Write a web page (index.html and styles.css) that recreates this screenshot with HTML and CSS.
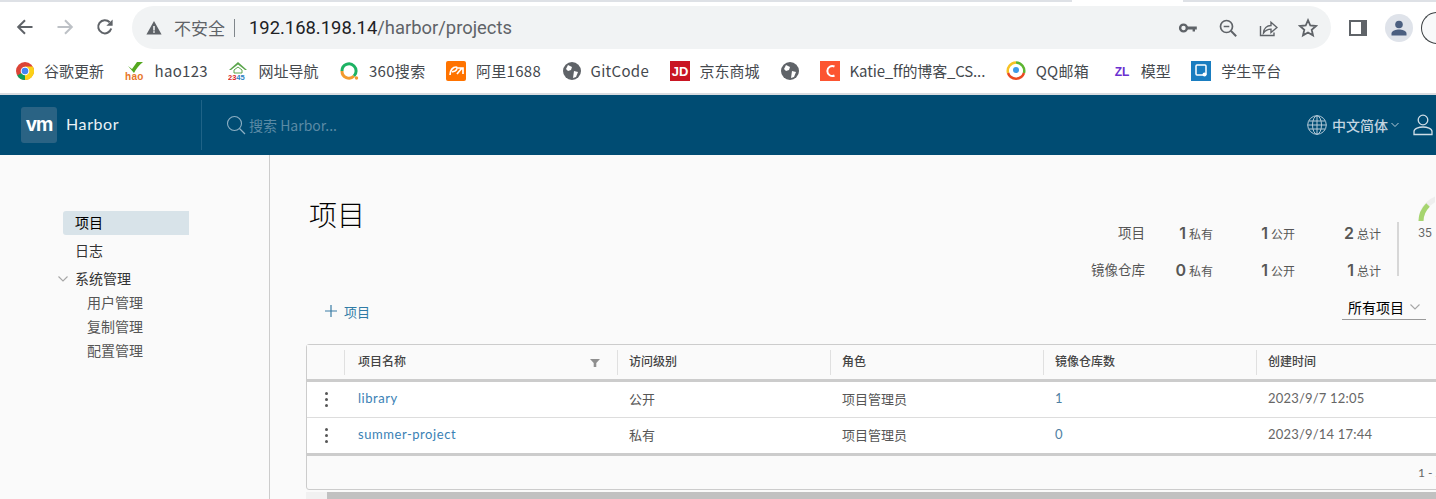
FILE: index.html
```html
<!DOCTYPE html>
<html lang="zh-CN">
<head>
  <meta charset="UTF-8" />
  <title>Harbor</title>
  <link rel="stylesheet" href="styles.css">
</head>
<body>
  <div class="tabstrip"><span class="strip-gray"></span><span class="strip-white"></span><span class="strip-rest"></span></div>

  <!-- browser toolbar -->
  <div class="toolbar">
    <button class="nav-btn">
      <svg width="20" height="20" viewBox="0 0 20 20"><path d="M17.5 10H3.5M10 3.2L3.2 10l6.8 6.8" fill="none" stroke="#5f6368" stroke-width="2"/></svg>
    </button>
    <button class="nav-btn">
      <svg width="20" height="20" viewBox="0 0 20 20"><path d="M2.5 10h14M10 3.2l6.8 6.8-6.8 6.8" fill="none" stroke="#bdc1c6" stroke-width="2"/></svg>
    </button>
    <button class="nav-btn">
      <svg width="20" height="20" viewBox="0 0 20 20"><path d="M16.2 11.5a6.6 6.6 0 1 1-1.5-6.2" fill="none" stroke="#5f6368" stroke-width="2"/><path d="M17.6 2.6v6.2h-6.2z" fill="#5f6368"/></svg>
    </button>
    <div class="urlbar">
      <svg class="warn" width="16" height="16" viewBox="0 0 16 16"><path d="M8 1l7.6 13.6H.4z" fill="#5f6368"/><path d="M7.2 6h1.6v4.4H7.2zM7.2 11.2h1.6v1.5H7.2z" fill="#f1f3f4"/></svg>
      <span class="insecure">不安全</span>
      <span class="sep"></span>
      <span class="url"><span class="host">192.168.198.14</span>/harbor/projects</span>
      <span class="url-icons">
        <svg width="20" height="20" viewBox="0 0 20 20"><circle cx="5.5" cy="10" r="3.4" fill="none" stroke="#5f6368" stroke-width="2.4"/><path d="M8.5 8.6h10.3v2.8h-1.8v2h-2.4v-2H8.5z" fill="#5f6368"/></svg>
        <svg width="20" height="20" viewBox="0 0 20 20"><circle cx="8.5" cy="8.5" r="6" fill="none" stroke="#5f6368" stroke-width="1.7"/><path d="M12.8 12.8l5.4 5.4" stroke="#5f6368" stroke-width="2"/><path d="M5.7 8.5h5.6" stroke="#5f6368" stroke-width="1.5"/></svg>
        <svg width="20" height="20" viewBox="0 0 20 20"><path d="M2.5 8v9.5h13.5v-3" fill="none" stroke="#5f6368" stroke-width="1.4"/><path d="M5.5 15c.3-4.800 3.500-7.500 7.500-7.500V4.200l6 5.300-6 5v-3.400c-3 0-5.500 1.200-7.500 3.900z" fill="none" stroke="#5f6368" stroke-width="1.4"/></svg>
        <svg width="20" height="20" viewBox="0 0 20 20"><path d="M10 2.200l2.300 5.300 5.700.5-4.300 3.800 1.300 5.600L10 14.500l-5 2.900 1.300-5.600L2 8l5.700-.5z" fill="none" stroke="#5f6368" stroke-width="1.800"/></svg>
      </span>
    </div>
    <div class="tool-right">
      <svg width="18" height="18" viewBox="0 0 18 18"><rect x="0" y="1" width="18" height="16" fill="#5f6368"/><rect x="2" y="3" width="10" height="12" fill="#fff"/></svg>
      <span class="avatar"><svg width="18" height="18" viewBox="0 0 18 18"><circle cx="9" cy="5.500" r="3.800" fill="#4b5f80"/><path d="M1.500 16.500v-2c0-2.800 4.500-4 7.500-4s7.500 1.200 7.500 4v2z" fill="#4b5f80"/></svg></span>
      <span class="profile-pill"></span>
    </div>
  </div>

  <!-- bookmarks -->
  <div class="bookmarks">
    <a class="bm">
      <svg width="18" height="18" viewBox="0 0 18 18"><circle cx="9" cy="9" r="9" fill="#db4437"/><path d="M9 9L1.200 13.500A9 9 0 0 0 9 18z" fill="#0f9d58"/><path d="M9 9v9a9 9 0 0 0 7.800-13.500H9z" fill="#fcd116"/><circle cx="9" cy="9" r="4.300" fill="#fff"/><circle cx="9" cy="9" r="3.300" fill="#4285f4"/></svg>
      谷歌更新
    </a>
    <a class="bm bm-latin">
      <svg width="20" height="20" viewBox="0 0 20 20"><path d="M3 5l4 3 5-7h6c-4 3-7 7-9 11z" fill="#54a81f"/><text x="0" y="19" class="fav-hao">hao</text></svg>
      hao123
    </a>
    <a class="bm">
      <svg width="20" height="20" viewBox="0 0 20 20"><path d="M10 1L1 9h2l7-5.500L17 9h2z" fill="#5aa54b"/><path d="M6 9l4-3 4 3v3H6z" fill="none" stroke="#5aa54b"/><text x="0" y="19" class="fav-2345"><tspan fill="#d9261c">23</tspan><tspan fill="#2b7fc3">45</tspan></text></svg>
      网址导航
    </a>
    <a class="bm bm-latin">
      <svg width="20" height="20" viewBox="0 0 20 20"><path d="M15 15a7 7 0 0 1-12-5" fill="none" stroke="#f29a2e" stroke-width="3"/><path d="M3 10a7 7 0 0 1 12-5 7 7 0 0 1 0 10" fill="none" stroke="#1db263" stroke-width="3"/><circle cx="17.500" cy="17" r="1.700" fill="#f29a2e"/></svg>
      360搜索
    </a>
    <a class="bm bm-latin">
      <svg width="20" height="20" viewBox="0 0 20 20"><rect width="20" height="20" rx="2" fill="#ff7300"/><path d="M4 14c0-5 3-8 6-8 2 0 1 3-1 4l-3 1M11 13l5-6M12 7h5v6" fill="none" stroke="#fff" stroke-width="1.700"/></svg>
      阿里1688
    </a>
    <a class="bm bm-latin bm-globe">
      <svg width="18" height="18" viewBox="0 0 18 18"><circle cx="9" cy="9" r="9" fill="#5f6368"/><path d="M5 3l4 2-1 3-3 1-2-2zM11 9l4 1-2 5-3 1z" fill="#fff"/></svg>
      GitCode
    </a>
    <a class="bm">
      <svg width="20" height="20" viewBox="0 0 20 20"><rect width="20" height="20" fill="#c91623"/><text x="10" y="15" text-anchor="middle" class="fav-letters">JD</text></svg>
      京东商城
    </a>
    <a class="bm bm-globe">
      <svg width="18" height="18" viewBox="0 0 18 18"><circle cx="9" cy="9" r="9" fill="#5f6368"/><path d="M5 3l4 2-1 3-3 1-2-2zM11 9l4 1-2 5-3 1z" fill="#fff"/></svg>
    </a>
    <a class="bm bm-tight">
      <svg width="20" height="20" viewBox="0 0 20 20"><rect width="20" height="20" fill="#fc5531"/><path d="M14.500 5.500a5 5 0 1 0 0 9" fill="none" stroke="#fff" stroke-width="2"/></svg>
      Katie_ff的博客_CS...
    </a>
    <a class="bm bm-latin">
      <svg width="20" height="20" viewBox="0 0 20 20"><path d="M2 12A8.500 8.500 0 0 1 10 1.500" fill="none" stroke="#f7c325" stroke-width="2.500"/><path d="M10 1.500A8.500 8.500 0 0 1 18 12" fill="none" stroke="#5cb531" stroke-width="2.500"/><path d="M18 12a8.500 8.500 0 0 1-16 0" fill="none" stroke="#ea4a21" stroke-width="2.500"/><circle cx="10" cy="9" r="3" fill="#3d9be9"/></svg>
      QQ邮箱
    </a>
    <a class="bm bm-zl">
      <svg width="20" height="20" viewBox="0 0 20 20"><text x="10" y="15" text-anchor="middle" class="fav-zl">ZL</text></svg>
      模型
    </a>
    <a class="bm">
      <svg width="20" height="20" viewBox="0 0 20 20"><rect width="20" height="20" fill="#1a7dc0"/><rect x="5" y="4" width="10" height="10" rx="1" fill="none" stroke="#fff" stroke-width="1.500"/><circle cx="13.500" cy="13.500" r="2" fill="#fff"/></svg>
      学生平台
    </a>
  </div>

  <!-- harbor header -->
  <header class="app-header">
    <div class="brand">
      <span class="logo">vm</span>
      <span class="brand-name">Harbor</span>
    </div>
    <div class="search">
      <svg width="20" height="20" viewBox="0 0 20 20"><circle cx="8.500" cy="8.500" r="7" fill="none" stroke="#8db0c4" stroke-width="1.100"/><path d="M13.500 13.500l5.500 5.500" stroke="#8db0c4" stroke-width="1.300"/></svg>
      <span>搜索 Harbor...</span>
    </div>
    <div class="header-right">
      <svg width="20" height="20" viewBox="0 0 20 20" fill="none" stroke="#b4cad8" stroke-width="1"><circle cx="10" cy="10" r="9.300"/><ellipse cx="10" cy="10" rx="4.500" ry="9.300"/><path d="M10 .7v18.600M1.800 6h16.400M.7 10h18.600M1.800 14h16.400"/></svg>
      <span class="lang">中文简体</span>
      <svg class="caret" width="8" height="6" viewBox="0 0 8 6"><path d="M.5 1l3.500 3.500L7.500 1" fill="none" stroke="#b4cad8"/></svg>
      <svg class="user" width="20" height="22" viewBox="0 0 20 22" fill="none" stroke="#cfdde6" stroke-width="1.300"><circle cx="10" cy="6" r="4.800"/><path d="M1 20.500v-3c0-3 5-4.500 9-4.500s9 1.500 9 4.500v3z"/></svg>
    </div>
  </header>

  <div class="app-body">
    <nav class="sidenav">
      <a class="nav-item active">项目</a>
      <a class="nav-item">日志</a>
      <div class="nav-group">
        <svg width="10" height="6" viewBox="0 0 10 6"><path d="M.5.500L5 5 9.500.5" fill="none" stroke="#a6a6a6" stroke-width="1.100"/></svg>
        系统管理
      </div>
      <a class="nav-sub">用户管理</a>
      <a class="nav-sub">复制管理</a>
      <a class="nav-sub">配置管理</a>
    </nav>

    <main class="content">
      <div class="top-row">
        <h1>项目</h1>
        <div class="stats">
          <span class="stat-label">项目</span>
          <span class="stat"><b>1</b>私有</span>
          <span class="stat"><b>1</b>公开</span>
          <span class="stat"><b>2</b>总计</span>
          <span class="stat-label">镜像仓库</span>
          <span class="stat"><b>0</b>私有</span>
          <span class="stat"><b>1</b>公开</span>
          <span class="stat"><b>1</b>总计</span>
        </div>
        <div class="quota">
          <svg width="17" height="26" viewBox="0 0 17 26"><path d="M3 26C3 16 8 8 20 3" fill="none" stroke="#eeeeee" stroke-width="5"/><path d="M3 26C3 20 5 15 10 10" fill="none" stroke="#a6d56f" stroke-width="5"/></svg>
          <span>35</span>
        </div>
      </div>

      <div class="action-row">
        <button class="add-btn">
          <svg width="12" height="12" viewBox="0 0 12 12"><path d="M6 0v12M0 6h12" stroke="#3a7ca5" stroke-width="1.200"/></svg>
          项目
        </button>
        <div class="filter">所有项目
          <svg width="10" height="6" viewBox="0 0 10 6"><path d="M.5.500L5 5 9.500.5" fill="none" stroke="#a6a6a6" stroke-width="1.100"/></svg>
        </div>
      </div>

      <div class="grid">
        <div class="row head">
          <div class="cell c-act"></div>
          <div class="cell c-name">项目名称
            <svg width="10" height="8" viewBox="0 0 10 8"><path d="M0 0h10L6.300 4v4H3.700V4z" fill="#8f8f8f"/></svg>
          </div>
          <div class="cell c-std">访问级别</div>
          <div class="cell c-std">角色</div>
          <div class="cell c-std">镜像仓库数</div>
          <div class="cell c-time">创建时间</div>
        </div>
        <div class="row">
          <div class="cell c-act"><span class="dots"><i></i><i></i><i></i></span></div>
          <div class="cell c-name"><a>library</a></div>
          <div class="cell c-std">公开</div>
          <div class="cell c-std">项目管理员</div>
          <div class="cell c-std count">1</div>
          <div class="cell c-time">2023/9/7 12:05</div>
        </div>
        <div class="row">
          <div class="cell c-act"><span class="dots"><i></i><i></i><i></i></span></div>
          <div class="cell c-name"><a>summer-project</a></div>
          <div class="cell c-std">私有</div>
          <div class="cell c-std">项目管理员</div>
          <div class="cell c-std count">0</div>
          <div class="cell c-time">2023/9/14 17:44</div>
        </div>
        <div class="grid-foot">1 - 2</div>
      </div>
      <div class="hscroll"><span class="arrow"></span><span class="thumb"></span></div>
    </main>
  </div>
</body>
</html>
```

FILE: styles.css
```css
* { margin: 0; padding: 0; box-sizing: border-box; }
html, body { width: 1436px; height: 499px; overflow: hidden; }
body {
  background: #fff;
  font-family: "Noto Sans CJK SC", "Noto Sans", sans-serif;
  color: #565656;
}
a { text-decoration: none; }
button { border: none; background: none; font: inherit; }

/* BROWSER */
.tabstrip { display: flex; height: 2px; }
.strip-gray { width: 1072px; background: #dee1e6; }
.strip-white { width: 111px; background: #fff; }
.strip-rest { flex: 1; background: #dee1e6; }

.toolbar {
  display: flex;
  align-items: center;
  height: 48px;
  padding-left: 15px;
}
.nav-btn { width: 20px; height: 20px; margin: 2px 20px 0 0; display: flex; flex: none; }
.nav-btn:nth-child(3) { margin-right: 17px; }
.urlbar {
  flex: none;
  width: 1199px;
  height: 43px;
  margin-top: 3px;
  background: #f1f3f4;
  border-radius: 22px;
  display: flex;
  align-items: center;
  padding: 0 13px 0 14px;
}
.insecure { margin-left: 12px; font-size: 17px; color: #5f6368; }
.sep { width: 1px; height: 18px; background: #80868b; margin: 0 14px 0 9px; }
.url { font-family: Roboto, sans-serif; font-size: 18.400px; color: #5f6368; }
.host { color: #202124; }
.url-icons { margin-left: auto; display: flex; gap: 20px; }
.tool-right { display: flex; align-items: center; margin-left: 18px; margin-top: 3px; flex: none; }
.avatar {
  width: 28px; height: 28px; margin-left: 18px;
  background: #dfe3ea; border-radius: 50%;
  display: flex; align-items: center; justify-content: center;
}
.profile-pill {
  width: 40px; height: 32px; margin-left: 8px;
  border: 1px solid #3c4043; border-radius: 16px 0 0 16px; border-right: none;
  background: #f8f9fa;
}

.bookmarks {
  display: flex;
  align-items: center;
  height: 45px;
  padding: 0 0 2px 16px;
  gap: 20.500px;
  border-bottom: 2px solid #dadce0;
  font-size: 15px;
  color: #3c4043;
}
.bm { display: flex; align-items: center; gap: 10px; white-space: nowrap; color: #45494e; }
.bm-latin { letter-spacing: .3px; }
.bm-tight { letter-spacing: -.15px; }
.bm-globe { margin-left: 1px; }
.bm-zl { margin-left: 2px; gap: 9px; }
.fav-hao { font: bold 10px "Liberation Sans", sans-serif; fill: #e8762b; }
.fav-2345 { font: bold 7.500px "Liberation Sans", sans-serif; }
.fav-letters { font: bold 13px "Liberation Sans", sans-serif; fill: #fff; }
.fav-zl { font: bold 12px "Liberation Sans", sans-serif; fill: #6a2fd0; }

/* HARBOR HEADER */
.app-header {
  height: 60px;
  background: #004c73;
  display: flex;
  align-items: center;
  padding-left: 21px;
  color: #fff;
}
.brand {
  width: 181px;
  height: 50px;
  display: flex;
  align-items: center;
  border-right: 1px solid #1f6387;
}
.logo {
  width: 36px; height: 36px;
  margin-top: -1px;
  background: #2a6384;
  border-radius: 3px;
  font: bold 19px Inter, sans-serif;
  letter-spacing: -1px;
  display: flex; align-items: center; justify-content: center;
}
.brand-name { margin: -3px 0 0 9px; font: 16px Lato, sans-serif; letter-spacing: .6px; color: #eaf1f5; }
.search { display: flex; align-items: center; gap: 3px; margin-left: 24px; font-size: 14px; color: #5b8aa5; }
.header-right { margin-left: auto; display: flex; align-items: center; margin-right: 3px; }
.lang { margin-left: 5px; font-size: 14px; font-weight: 500; color: #c4d5e0; }
.caret { margin-left: 3px; }
.user { margin-left: 14px; }

/* BODY */
.app-body { display: flex; height: 344px; background: #fafafa; overflow: hidden; }
.sidenav {
  width: 270px;
  flex: none;
  border-right: 1px solid #ccc;
  padding: 56px 0 0 63px;
  font-size: 14px;
  color: #333;
}
.nav-item {
  display: block;
  width: 126px;
  height: 24px;
  line-height: 23px;
  padding-left: 12px;
  margin-bottom: 4px;
}
.nav-item.active { background: #d8e3e9; color: #000; border-radius: 3px 0 0 3px; }
.nav-group { position: relative; height: 24px; line-height: 23px; padding-left: 12px; }
.nav-group svg { position: absolute; left: -5px; top: 9px; }
.nav-sub { display: block; height: 24px; line-height: 23px; padding-left: 24px; color: #565656; }

.content { flex: none; width: 1166px; padding-left: 36px; }
.top-row { display: flex; height: 130px; padding-top: 40px; }
h1 { font-size: 28px; font-weight: 300; color: #000; margin-left: 3px; line-height: 38px; width: 240px; }
.stats {
  margin-left: auto;
  display: grid;
  grid-template-columns: 100px 68px 82px 86px;
  grid-auto-rows: 17px;
  row-gap: 20px;
  align-items: center;
  height: 54px;
  margin-top: 27px;
  padding: 2px 16px 0 0;
  border-right: 2px solid #d7d7d7;
  font-size: 12px;
  color: #565656;
  line-height: 17px;
}
.stat-label { font-size: 13.500px; text-align: right; }
.stat { text-align: right; white-space: nowrap; }
.stat b { font: 600 16px Inter, sans-serif; color: #565656; margin-right: 3px; }
.quota { flex: none; width: 37px; font: 11.500px Inter, sans-serif; color: #666; padding-left: 19px; }
.quota svg { display: block; margin-bottom: 5px; }
.quota span { display: block; }

.action-row { display: flex; align-items: center; justify-content: space-between; height: 32px; margin-top: 11px; padding-left: 19px; }
.add-btn { display: flex; align-items: center; gap: 7px; font-size: 13px; color: #2f7ba6; padding-bottom: 2px; }
.filter {
  align-self: flex-start;
  flex: none;
  width: 84px; height: 24px; margin-right: 10px;
  border-bottom: 1px solid #9a9a9a;
  padding: 0 0 2px 6px;
  font-size: 14px; color: #000;
  display: flex; align-items: center; gap: 6px;
}

.grid {
  margin-top: 16px;
  width: 1200px;
  border: 1px solid #ccc;
  border-radius: 3px;
  background: #fafafa;
}
.row { display: flex; height: 36px; align-items: center; background: #fff; border-bottom: 1px solid #ddd; font-size: 13px; color: #565656; }
.row.head { background: #fafafa; border-bottom: 3px solid #ccc; font-size: 12px; font-weight: 500; height: 37px; color: #444; }
.cell { padding: 0 0 3px 12px; height: 100%; display: flex; align-items: center; }
.head .cell + .cell { position: relative; }
.head .cell + .cell::before {
  content: ""; position: absolute; left: 0; top: 5px; width: 1px; height: 25px; background: #e0e0e0;
}
.c-act { width: 37px; padding: 0 0 1px 18px; flex: none; }
.c-name { width: 273px; flex: none; padding-left: 14px; position: relative; }
.c-name svg { position: absolute; right: 17px; top: 14px; }
.c-name a { color: #3a81b5; font-family: Lato, sans-serif; font-size: 13px; letter-spacing: .55px; }
.c-std { width: 213px; flex: none; }
.c-time { flex: 1; }
.row:not(.head) .c-time, .count { font-family: Lato, sans-serif; font-size: 13px; letter-spacing: .2px; color: #666; }
.row:not(.head) .count { color: #4f7fa3; }
.dots { display: flex; flex-direction: column; gap: 3px; }
.dots i { width: 3px; height: 3px; border-radius: 50%; background: #565656; }
.grid-foot {
  height: 36px;
  border-top: 3px solid #ccc;
  margin-top: -1px;
  font: 12px Lato, sans-serif;
  color: #666;
  display: flex; align-items: center;
  padding-left: 1111px;
  white-space: nowrap;
  overflow: hidden;
}
.hscroll { display: flex; height: 8px; margin-top: 2px; }
.arrow { width: 21px; background: #f1f1f1; }
.thumb { flex: 1; background: #c1c1c1; }
```
